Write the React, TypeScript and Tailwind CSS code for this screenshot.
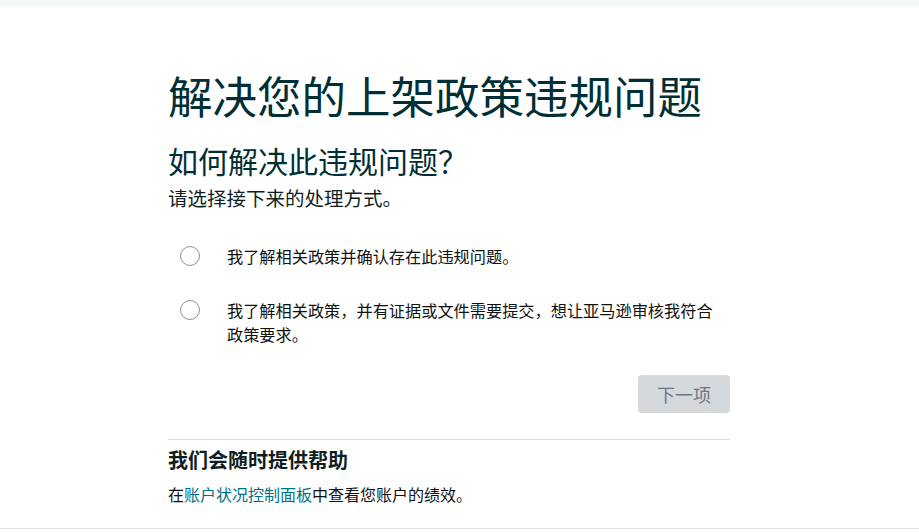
import { useState } from 'react';

const options = [
  { id: 'confirm', label: '我了解相关政策并确认存在此违规问题。' },
  {
    id: 'appeal',
    label: '我了解相关政策，并有证据或文件需要提交，想让亚马逊审核我符合政策要求。',
  },
];

export default function App() {
  const [choice, setChoice] = useState<string | null>(null);

  return (
    <div
      className="min-h-[532px] bg-white text-[#0f2c33]"
      style={{ fontFamily: '"Noto Sans CJK SC", "Noto Sans", sans-serif' }}
    >
      {/* Top strip */}
      <div className="h-[6px] bg-[#f3f7f8]" />

      <div className="ml-[168px] w-[562px]">
        {/* Headings */}
        <h1 className="mt-[62px] text-[44.5px] leading-[54px] font-normal text-[#002f36]">
          解决您的上架政策违规问题
        </h1>
        <h2 className="mt-[20px] text-[30px] leading-[36px] font-normal text-[#002f36]">
          如何解决此违规问题？
        </h2>
        <p className="mt-[7px] text-[19.5px] leading-[26px] text-[#0f1e22]">
          请选择接下来的处理方式。
        </p>

        {/* Options */}
        <div className="mt-[33px] flex flex-col gap-[30px]">
          {options.map((opt) => (
            <label
              key={opt.id}
              className="flex items-start cursor-pointer"
              onClick={() => setChoice(opt.id)}
            >
              <span
                className={`ml-[12px] mt-[2px] h-[20px] w-[20px] shrink-0 rounded-full border bg-white ${
                  choice === opt.id ? 'border-[5px] border-[#008296]' : 'border-[#8d9096]'
                }`}
              />
              <span className="ml-[27px] w-[492px] text-[16.2px] leading-[24px] text-[#0f1111]">
                {opt.label}
              </span>
            </label>
          ))}
        </div>

        {/* Next button */}
        <div className="mt-[29px] flex justify-end">
          <button
            type="button"
            disabled={!choice}
            className="h-[38px] w-[92px] rounded-[4px] bg-[#d5d9dc] text-[18px] text-[#6b7785]"
          >
            下一项
          </button>
        </div>

        {/* Help */}
        <div className="mt-[26px] border-t border-[#d5d9d9]">
          <h3 className="mt-[7px] text-[20px] leading-[26px] font-bold text-[#0f1e22]">
            我们会随时提供帮助
          </h3>
          <p className="mt-[9px] text-[16px] leading-[24px] text-[#0f1111]">
            在<a href="#" className="text-[#007185]">账户状况控制面板</a>中查看您账户的绩效。
          </p>
        </div>
      </div>

      {/* Footer edge */}
      <div className="mt-[22px] h-[20px] border-t border-[#e0e2e2] bg-white" />
    </div>
  );
}
